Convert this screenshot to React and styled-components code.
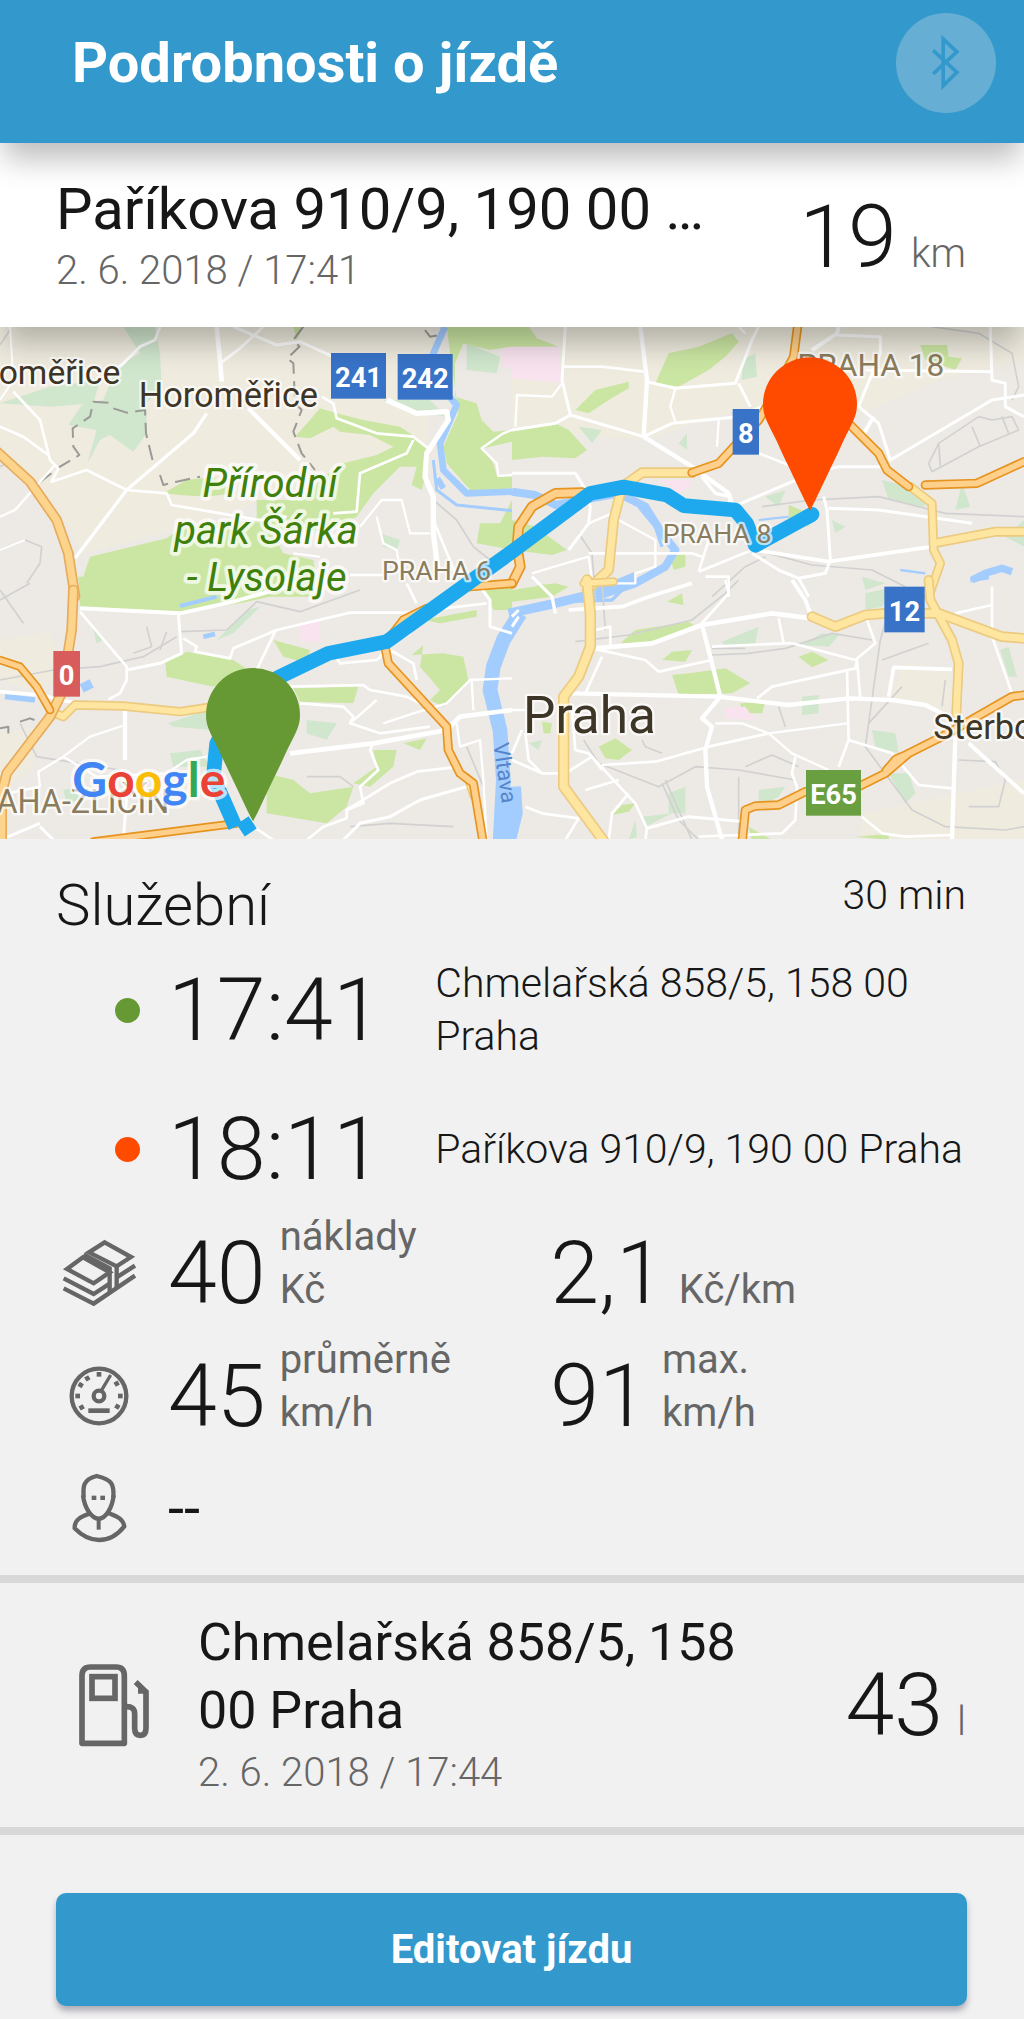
import React from "react";
import styled, { createGlobalStyle } from "styled-components";

const trip = {
  title: "Paříkova 910/9, 190 00 …",
  date: "2. 6. 2018 / 17:41",
  distance: "19",
  type: "Služební",
  duration: "30 min",
};

const stops = [
  { time: "17:41", address: "Chmelařská 858/5, 158 00 Praha", color: "#669933" },
  { time: "18:11", address: "Paříkova 910/9, 190 00 Praha", color: "#ff4b00" },
];

const refuel = {
  address: "Chmelařská 858/5, 158 00 Praha",
  date: "2. 6. 2018 / 17:44",
  amount: "43",
};

// The map is made of four tiles, every tile has its own coordinates
const tiles = [
  {
    x: 0,
    y: -21,
    fields: ["0,20 1300,20 1280,380 1100,480 800,540 480,640 250,700 170,560 0,390"],
    pale: [
      "370,20 465,20 480,100 485,200 440,250 440,340 400,395 330,345 300,360 262,430 290,330 205,315 245,255 310,240 350,140 420,100",
      "0,250 150,200 300,180 280,250 150,260",
      "1400,70 1500,110 1490,160 1400,150",
      "1150,240 1290,240 1340,290 1220,270",
      "1140,640 1200,660 1190,690 1150,680",
    ],
    parks: [
      "1340,20 1536,20 1536,80 1470,90 1390,70 1365,130 1365,230 1430,250 1445,300 1480,335 1536,330 1536,365 1450,385 1480,430 1490,465 1536,470 1536,505 1415,515 1340,430 1330,380 1375,280",
      "885,350 930,300 960,265 1010,280 1090,300 1200,320 1245,350 1290,385 1285,440 1265,510 1235,495 1250,440 1200,440 1120,520 1070,590 1000,625 870,640 770,600 770,540 900,540 970,470 1030,430 1130,405 1180,380 1110,345 1020,335 1000,320 930,355",
      "230,830 270,710 500,655 540,625 700,600 800,610 850,700 940,720 960,830",
      "490,520 560,480 640,470 700,520 620,530 540,525",
      "1430,670 1440,610 1500,610 1536,540 1536,690",
      "880,20 910,20 890,60",
    ],
    pink: ["1505,85 1536,80 1536,145 1510,140"],
    rivers: [
      ["1335,20 1300,100 1340,220 1370,255 1320,370 1330,450 1400,520 1536,515", 20],
      ["1300,420 1310,510 1370,555 1536,572", 9],
      ["1312,475 1330,505", 18],
    ],
    rails: ["0,440 20,430", "1300,540 1370,600 1420,680 1470,720", "0,690 75,660 125,680 120,730 80,790", "0,75 30,30"],
    borders: [
      "910,20 880,60 898,80 862,115 880,130 885,250 905,270 880,335 905,400 945,450",
      "325,248 280,245 270,290 218,325 220,380 238,405 180,440 115,490",
      "340,265 380,278 435,270 438,340 460,430",
      "480,465 490,495 530,485 600,470",
      "1275,30 1290,50 1320,45",
    ],
    roads: [
      ["650,20 660,120 665,185", 14],
      ["660,130 720,85 790,20", 8],
      ["700,20 830,75 900,65 1010,115", 9],
      ["480,20 465,60 420,80 365,135 330,160", 9],
      ["30,20 40,180 0,240", 6],
      ["40,215 120,300 150,420 175,445 155,485 260,450 380,510 500,520 515,555 780,600 860,590", 8],
      ["0,320 70,350 145,405", 8],
      ["0,590 45,570 165,435", 7],
      ["745,265 900,420", 13],
      ["620,280 580,340 380,510 225,715", 10],
      ["965,230 1000,250 1010,295 1130,340 1240,350 1285,385", 8],
      ["1160,240 1250,280 1340,275 1345,300 1280,400 1275,470 1300,530 1300,640 1315,760", 16],
      ["1240,360 1220,400 1080,460 1070,575 1000,580", 8],
      ["1050,765 1150,765 M1080,620 1145,540 1205,540 1230,640 1290,640", 7],
      ["1130,590 1150,670 1190,690 1200,750", 7],
      ["1300,600 1370,770", 8],
      ["1536,330 1510,340 1445,385 1490,430 1495,468 1536,465", 7],
      ["0,690 75,660 M880,700 960,710", 6],
    ],
    yellow: [],
    orange: [],
    amber: ["-20,385 90,485 170,600 205,700 225,830"],
  },
  {
    x: 1536,
    y: -21,
    fields: ["0,20 1536,20 1536,120 1280,180 1000,300 700,260 400,360 0,330"],
    pale: [
      "690,120 730,100 735,170 690,180",
      "200,320 270,330 240,370",
      "500,370 525,340 525,390",
      "1110,480 1230,510 1240,560 1130,540",
      "1350,490 1375,560 1330,570",
      "760,530 820,510 800,560",
      "1480,650 1536,600 1536,680",
      "1050,770 1120,790 1060,810",
      "960,600 1000,620 970,640",
    ],
    parks: [
      "0,20 50,20 75,55 140,80 0,80",
      "430,190 470,100 560,80 660,40 680,65 640,110 590,150 500,200",
      "190,270 250,210 350,185 350,205 290,240 230,280",
      "0,330 130,310 170,330 225,390 190,415 90,410 0,420",
      "1225,75 1305,75 1310,110 1350,115 1330,150 1240,120",
      "0,600 70,620 165,690 120,705 0,690",
      "470,700 520,700 520,740 485,750",
      "830,555 890,580 890,620 830,600",
      "80,790 140,800 100,830 60,830",
    ],
    pink: ["0,80 140,80 150,190 0,175", "440,480 530,480 540,500 500,520"],
    rivers: [
      ["0,515 70,525 130,555 320,520 400,560 450,640 490,690 460,740 370,790 250,830", 24],
      ["380,560 430,620 450,680", 10],
      ["740,600 830,590", 6],
      ["1380,780 1420,760 1470,745 1500,755", 22],
      ["1165,750 1240,760", 7],
    ],
    rails: [
      "750,560 900,540 1100,530 1300,580 1536,590",
      "200,640 240,700 250,830",
      "770,700 900,735 1080,750 1180,800",
      "600,830 700,740 760,710",
      "1260,20 1400,40 1500,100 1520,200 1500,240",
      "1250,430 1280,370 1400,290 1440,300 1500,290 1520,330 1400,380 1260,455 1250,430",
      "1280,370 1285,440 M1380,320 1405,380 M1470,290 1490,340",
    ],
    borders: [],
    roads: [
      ["160,20 150,180 175,285 130,310 0,330", 9],
      ["155,140 270,140 395,155", 8],
      ["385,20 405,180 395,350 540,440 650,520 660,550", 13],
      ["175,285 395,350 480,310 680,290 750,260", 9],
      ["405,185 490,205 670,190 720,60 740,20", 9],
      ["490,205 475,260 490,305 M620,300 615,380 M680,20 700,40", 7],
      ["680,190 715,260", 9],
      ["10,320 15,225 120,230 150,190", 7],
      ["0,460 190,460 215,500 235,560 230,610 170,690", 9],
      ["675,555 900,460 980,440 1130,440", 9],
      ["740,400 830,435 900,440", 8],
      ["570,470 610,520 655,530 650,555", 10],
      ["975,45 1105,50 1105,100 1060,210 1040,260 1100,310 1135,420 1440,240 1536,225", 9],
      ["1435,20 1440,180 1480,190 1480,260 1536,290 M1060,150 1440,155", 9],
      ["900,90 975,40 980,20 M1085,290 1050,350", 12],
      ["935,530 945,570 955,720 940,760 860,775", 9],
      ["950,565 1100,570 1380,610", 9],
      ["730,690 950,725 1260,680", 11],
      ["720,700 800,750 860,775 890,830", 9],
      ["230,700 540,700 570,710 M560,755 720,690 M580,770 650,770 650,830 M560,755 590,660", 8],
      ["320,600 430,660 430,740 370,760 370,790 300,790", 7],
      ["60,760 160,730 230,710 240,780", 7],
      ["230,610 300,580", 7],
    ],
    yellow: [
      ["345,490 390,458 540,458", 24],
      ["325,520 305,600 290,750 225,810", 24],
      ["1195,500 1260,550 1265,690 1285,730 1250,830", 20],
      ["1265,670 1450,635 1536,635", 22],
    ],
    orange: [
      ["858,10 845,110 770,250 740,300 620,430 540,458", 20],
      ["1010,310 1100,400 1125,450 1190,500", 20],
      ["1240,495 1395,490 1536,425", 20],
      ["210,518 130,520 60,560 20,620 15,680 25,740 0,790", 24],
    ],
    amber: [],
  },
  {
    x: 0,
    y: 759,
    fields: ["0,180 150,160 200,300 100,330 0,300", "0,460 120,440 100,560 0,640"],
    pale: [
      "275,130 310,180 290,190",
      "505,430 620,390 640,450 520,440",
      "510,520 600,510 630,560 520,560",
      "650,180 740,90 780,80 700,160",
      "920,420 1010,430 980,480 920,460",
      "190,630 240,620 240,660 200,670",
    ],
    parks: [
      "235,-10 960,-10 940,20 720,70 540,95 240,85",
      "495,240 560,215 700,240 760,280 640,320 500,290",
      "820,180 930,210 920,250 850,230",
      "880,325 1075,320 1060,370 900,365",
      "800,580 880,600 930,640 1060,620 1040,680 980,730 800,700",
      "1235,225 1330,220 1390,230 1405,300 1330,380 1290,360 1320,330 1260,260 1270,195",
      "1120,510 1190,510 1180,560 1110,620 1060,610 1130,560",
      "1270,120 1430,90 1430,110 1320,130",
      "1450,20 1536,0 1536,90 1480,90",
      "1210,490 1280,475 1260,510",
    ],
    pink: ["900,125 960,122 962,185 902,185"],
    rivers: [
      ["1560,100 1510,180 1480,260 1470,330 1500,450 1510,600 1500,790", 44],
      ["540,78 650,50", 12],
      ["15,350 105,360", 16],
      ["245,325 275,310", 28],
      ["610,170 645,162", 14],
    ],
    rails: [
      "0,300 160,270 300,260 430,230 530,170",
      "440,140 455,200 400,220 M500,155 480,210",
      "540,155 680,150 770,65 900,95 1080,30",
      "0,30 70,130 M0,60 90,10",
      "60,430 110,530 360,570",
      "1050,740 1170,730 1360,740 M1400,500 1450,620",
      "920,590 1020,590 1060,620",
    ],
    borders: ["60,425 90,415 130,430 160,415", "0,445 25,440 25,470"],
    roads: [
      ["240,85 540,100 700,65 860,20", 12],
      ["240,95 380,260 380,300 360,340 325,358", 8],
      ["535,105 545,220 480,250 380,270", 9],
      ["550,175 590,200 585,215 690,235 700,205 830,150 1050,98 1260,98", 8],
      ["825,155 770,270", 8],
      ["0,335 120,345 230,370", 11],
      ["375,385 375,540", 13],
      ["375,435 270,470 190,530 115,575 120,620 0,645", 7],
      ["190,530 290,590 500,580 560,540 620,530", 7],
      ["870,520 1120,490 1340,450 1380,410 1536,390", 14],
      ["860,320 1090,315 1110,330 1220,350 1260,370", 8],
      ["900,370 1030,380 1060,410 1050,430 1140,460 1290,440", 8],
      ["1120,490 1110,510 1135,570 1080,620 1090,670 1040,690 1040,715 970,740 920,780", 8],
      ["1030,780 1080,730 1170,710 1260,660 1400,620", 9],
      ["1040,690 1170,610 1250,575 1380,560", 8],
      ["1000,220 1020,250 1130,240 1170,210 1240,250 1250,300", 8],
      ["1140,230 1160,200 1230,160 1240,110 1290,90 1460,70", 8],
      ["1130,360 1050,430 M1150,430 1240,400 1340,370 1410,300 1536,295", 7],
      ["1440,20 1470,60 1470,140 1536,160", 9],
      ["1370,430 1380,500 1440,480 1450,600 1460,780 M1415,300 1420,390", 7],
      ["120,740 160,780 M0,780 120,730 M380,650 370,780", 9],
      ["760,740 820,780 M1220,10 1250,70", 8],
    ],
    yellow: [
      ["165,400 190,410 225,375 370,378 540,395 640,380", 20],
      ["1420,650 1400,590", 14],
    ],
    orange: [
      ["0,240 60,260 110,320 150,390", 18],
      ["1155,200 1165,250 1340,440 1345,510 1380,580 1420,610 1450,790", 20],
      ["280,785 710,730", 18],
      ["1160,185 1210,120 1280,85 M1410,20 1536,10", 20],
    ],
    amber: ["220,30 215,150 185,340 150,410 20,580 5,640 5,790"],
  },
  {
    x: 1536,
    y: 759,
    fields: ["1180,250 1320,270 1310,400 1130,350", "1050,700 1536,600 1536,780 1050,780"],
    pale: [
      "630,185 740,140 730,190 640,200",
      "870,195 930,160 980,165 950,200",
      "1060,90 1060,40 1150,20 1110,80",
      "1080,450 1150,460 1160,520 1090,500",
      "1130,580 1190,580 1210,640 1180,670",
      "740,630 820,620 800,650 740,680",
      "470,640 520,620 520,700 470,700",
      "390,710 480,700 400,740",
      "870,350 920,345 920,400 870,405",
      "1465,210 1490,200 1515,290 1490,290",
      "50,490 90,480 80,510",
      "370,720 375,770 350,780",
    ],
    parks: [
      "0,30 130,10 170,20 120,50 0,65",
      "325,190 370,150 530,125 545,135 440,185",
      "480,285 530,280 640,265 715,310 660,340 500,345",
      "450,240 480,215 540,210 520,245",
      "465,65 510,40 515,75",
      "860,230 900,215 950,240 900,262",
      "260,500 310,475 360,510 320,540 280,535",
      "685,370 760,365 750,400 690,400",
      "90,425 120,430 115,460 95,460",
      "300,705 330,675 370,670 350,695",
      "710,740 780,780 720,780",
      "1030,770 1130,762 1130,780",
    ],
    pink: ["635,385 700,380 730,420 640,415"],
    rivers: [
      ["-10,100 130,70 250,40 370,-10", 28],
      ["160,65 300,60 330,30", 10],
      ["-10,780 10,700 5,620", 44],
      ["1375,0 1430,-10", 16],
    ],
    rails: [
      "190,185 350,165 540,120 640,40 680,0",
      "600,205 700,205 M600,225 710,220 820,205 960,160 1080,180",
      "215,480 260,550 440,620 550,560 680,570 850,600",
      "450,610 500,720 560,780 M460,600 540,780",
      "680,590 680,780 M700,560 780,525 860,560",
      "1105,180 1060,500 1200,690 1300,740 1480,750 1536,740",
      "1110,240 1250,190 M1070,430 1170,320 M1105,180 1150,20",
      "390,480 400,500 450,520 M800,380 820,440",
      "1340,540 1450,545 1480,600 1460,680 1370,680 M1300,300 1290,380",
      "270,10 280,150",
    ],
    borders: [],
    roads: [
      ["60,-10 120,50 130,100", 10],
      ["170,90 240,85 330,80 410,50 540,10", 11],
      ["0,110 20,90 M0,140 20,110", 9],
      ["245,205 420,190 570,135 780,100 900,115", 14],
      ["570,135 600,250 625,350 570,415 600,440 580,510 585,620 630,780", 13],
      ["565,135 650,40 640,0", 8],
      ["240,205 400,240 440,275 600,240", 8],
      ["180,340 620,350 830,375 1010,355 1140,360 1240,375 1290,400", 13],
      ["800,115 815,190 600,200 M815,190 840,190 1030,240 1090,190 1065,120", 8],
      ["735,355 780,320 1030,265 1035,240 1045,355 M1005,270 1010,480 980,560", 8],
      ["1130,350 1145,262 1320,268", 11],
      ["610,430 690,430 770,460 1005,430 M770,460 840,520 950,570", 7],
      ["270,555 430,545 590,500 770,460", 8],
      ["1010,480 1140,520 1220,615 1320,625", 8],
      ["840,0 880,60 900,115", 12],
      ["1330,470 1320,780", 13],
      ["1370,490 1536,640", 12],
      ["1440,20 1440,170 1500,340 M1330,100 1440,75", 8],
      ["270,230 220,340 M250,150 295,140 295,195", 8],
      ["0,540 90,580 160,580 240,530 270,570 M40,460 50,540 90,580", 8],
      ["180,390 190,510 230,520 370,670 405,745 400,780", 8],
      ["405,745 530,710 700,725", 9],
      ["850,530 840,580 855,620 850,720 810,760 560,770 M1050,710 1110,760 1180,770 1320,765", 8],
      ["40,680 90,700 200,715 160,780 M220,630 320,600 M290,780 300,700 350,640", 8],
      ["0,390 40,390 M30,450 0,520", 8],
    ],
    yellow: [
      ["225,0 235,100 235,200 200,290 155,350 155,620 280,790", 26],
      ["900,110 970,140 1060,105 1120,100 1280,100 1470,170 1536,175", 24],
      ["1250,0 1255,60 1320,180 1340,250 1333,400", 22],
      ["215,10 305,5", 18],
    ],
    orange: [
      ["690,790 700,690 730,678 800,675 880,635 1040,620 1120,580 1190,520 1290,470 1500,350 1536,345", 20],
      ["1120,570 1150,535 1185,520", 14],
    ],
    amber: [],
  },
];

const points = (list) => `M${list}`;

function TileLayer({ children }) {
  return tiles.map((tile) => (
    <g key={`${tile.x}-${tile.y}`} transform={`translate(${tile.x} ${tile.y})`}>
      {children(tile)}
    </g>
  ));
}

function Lines({ list, color, casing, extra = 0 }) {
  return (
    <>
      {casing &&
        list.map(([d, width]) => (
          <path key={`c${d}`} d={points(d)} stroke={casing} strokeWidth={width + 8} />
        ))}
      {list.map(([d, width]) => (
        <path key={d} d={points(d)} stroke={color} strokeWidth={width + extra} />
      ))}
    </>
  );
}

function Shapes({ list, color }) {
  return list.map((p) => <polygon key={p} points={p} fill={color} />);
}

function Pin({ x, y, color }) {
  return (
    <path
      transform={`translate(${x} ${y})`}
      fill={color}
      d="M0,319 L-15,290 C-50,215 -78,160 -100,110 C-125,58 -141,38 -141,0 A141,141 0 1 1 141,0 C141,38 125,58 100,110 C78,160 50,215 15,290 Z"
    />
  );
}

function RoadBadge({ x, y, width, color, children }) {
  return (
    <g transform={`translate(${x} ${y})`}>
      <rect width={width} height="137" fill={color} />
      <BadgeText x={width / 2} y="103">
        {children}
      </BadgeText>
    </g>
  );
}

function TripMap() {
  return (
    <MapSvg viewBox="0 0 3072 1536" role="img" aria-label="Mapa trasy">
      <rect width="3072" height="1536" fill="#edeae5" />
      <TileLayer>
        {(t) => (
          <>
            <Shapes list={t.fields} color="#efebdf" />
            <Shapes list={t.pale} color="#d0e6cd" />
            <Shapes list={t.parks} color="#cbe6a3" />
            <Shapes list={t.pink} color="#f8e3ef" />
          </>
        )}
      </TileLayer>
      <g fill="none" strokeLinejoin="round">
        <TileLayer>{(t) => <Lines list={t.rivers} color="#a3ccff" />}</TileLayer>
        <TileLayer>
          {(t) => <Lines list={t.rails.map((d) => [d, 5])} color="#d2d1d1" />}
        </TileLayer>
        <g strokeDasharray="46 22">
          <TileLayer>
            {(t) => <Lines list={t.borders.map((d) => [d, 6])} color="#9c9a97" />}
          </TileLayer>
        </g>
        <TileLayer>{(t) => <Lines list={t.roads} color="#ffffff" />}</TileLayer>
        <g strokeLinecap="round">
          <TileLayer>
            {(t) => (
              <>
                <Lines list={t.yellow} color="#ffe6a0" casing="#ecca80" extra={-2} />
                <Lines
                  list={t.amber.map((d) => [d, 24])}
                  color="#fdd48c"
                  casing="#e6ab5c"
                  extra={-2}
                />
                <Lines list={t.orange} color="#ffd08c" casing="#e69420" extra={-2} />
              </>
            )}
          </TileLayer>
        </g>
        <g stroke="#1ea9ee" strokeWidth="44">
          <path d="M2436,562 L2266,655 L2240,590 L2206,549 L2051,536 L2001,504 L1871,480 L1771,499 L1536,674 L1160,944 L985,979 L840,1049 L720,1110 L650,1250 L640,1350 L706,1500" />
          <path d="M722,1510 L758,1486" />
          <path d="M2420,571 L2436,562" strokeLinecap="round" />
        </g>
      </g>

      <PlaceText x="-4" y="172" size="101">oměřice</PlaceText>
      <PlaceText x="416" y="241" size="103">Horoměřice</PlaceText>
      <ParkText x="810" y="509">Přírodní</ParkText>
      <ParkText x="798" y="651">park Šárka</ParkText>
      <ParkText x="800" y="791">- Lysolaje</ParkText>
      <DistrictText x="1146" y="759" size="80">PRAHA 6</DistrictText>
      <DistrictText x="1988" y="647" size="80">PRAHA 8</DistrictText>
      <DistrictText x="2392" y="146" size="95">PRAHA 18</DistrictText>
      <DistrictText x="508" y="1459" size="97" textAnchor="end">PRAHA-ZLIČÍN</DistrictText>
      <PlaceText x="1569" y="1217" size="154">Praha</PlaceText>
      <PlaceText x="2800" y="1236" size="103">Sterbohol</PlaceText>
      <RiverText transform="translate(1480 1250) rotate(82)">Vltava</RiverText>

      <RoadBadge x="993" y="78" width={165} color="#3873c8">241</RoadBadge>
      <RoadBadge x="1193" y="81" width={165} color="#3873c8">242</RoadBadge>
      <RoadBadge x="2198" y="246" width={79} color="#3873c8">8</RoadBadge>
      <RoadBadge x="2653" y="779" width={121} color="#3873c8">12</RoadBadge>
      <RoadBadge x="2418" y="1329" width={165} color="#699f40">E65</RoadBadge>
      <RoadBadge x="160" y="972" width={80} color="#d95c5c">0</RoadBadge>

      <LogoText x="217" y="1409">
        <tspan fill="#4285f4">G</tspan>
        <tspan fill="#ea4335">o</tspan>
        <tspan fill="#fbbc05">o</tspan>
        <tspan fill="#4285f4">g</tspan>
        <tspan fill="#34a853">l</tspan>
        <tspan fill="#ea4335">e</tspan>
      </LogoText>
      <Pin x={759} y={1164} color="#669933" />
      <Pin x={2430} y={232} color="#ff4b00" />
    </MapSvg>
  );
}

function BluetoothIcon() {
  return (
    <svg width="100" height="100" viewBox="48 39 299 299" fill="none" aria-hidden="true">
      <path
        d="M159,151 L230,216 L189,257 V117 L230,155 L159,221"
        stroke="#3399cc"
        strokeWidth="11"
      />
    </svg>
  );
}

function MoneyIcon() {
  return (
    <svg width="76" height="72" viewBox="182 110 228 216" fill="none" aria-hidden="true">
      <g stroke="#666666" strokeWidth="13">
        <path d="M313,126 L392,170 L349,198 L266,156 Z" />
        <path d="M248,171 L200,206 L280,249 L328,216 Z" />
        <path d="M250,162 L328,204 V274" />
        <path d="M349,192 V260" />
        <path d="M190,234 L280,281 L328,250 M349,231 L404,196" />
        <path d="M190,264 L280,310 L404,226" />
      </g>
    </svg>
  );
}

function GaugeIcon() {
  const ticks = [
    [296, 523, 0],
    [261, 535, -30],
    [241, 555, -60],
    [232, 588, 0],
    [244, 622, 60],
    [349, 551, 60],
    [360, 588, 0],
    [351, 620, 30],
  ];
  return (
    <svg width="60" height="60" viewBox="206 498 180 180" fill="none" aria-hidden="true">
      <circle cx="296" cy="588" r="82" stroke="#666666" strokeWidth="13" />
      <circle cx="296" cy="588" r="16" stroke="#666666" strokeWidth="13" />
      <path d="M303,572 L331,525" stroke="#666666" strokeWidth="10" />
      {ticks.map(([x, y, angle]) => (
        <rect
          key={`${x}-${y}`}
          x={x - 7}
          y={y - 7}
          width="14"
          height="14"
          fill="#666666"
          transform={`rotate(${angle} ${x} ${y})`}
        />
      ))}
      <rect x="264" y="625" width="64" height="14" fill="#666666" />
    </svg>
  );
}

function DriverIcon() {
  return (
    <svg width="60" height="72" viewBox="208 817 180 216" fill="none" aria-hidden="true">
      <g stroke="#666666" strokeWidth="13" strokeLinejoin="round">
        <path d="M252,893 C250,862 248,840 291,829 C334,840 344,850 341,893" />
        <path d="M250,887 C254,925 276,957 297,957 C318,957 338,925 342,887" />
        <path d="M270,942 C240,952 224,962 225,986 C250,1012 276,1021 298,1021 C322,1021 350,1010 374,980 C369,955 350,950 326,940" />
        <path d="M297,957 V990" strokeWidth="12" />
      </g>
      <rect x="276" y="888" width="14" height="13" fill="#666666" />
      <rect x="302" y="888" width="14" height="13" fill="#666666" />
    </svg>
  );
}

function FuelIcon() {
  return (
    <svg width="72" height="84" viewBox="84 66 216 252" fill="none" aria-hidden="true">
      <g stroke="#666666" strokeWidth="17">
        <path d="M96,307 V104 Q96,78 122,78 H198 Q223,78 223,104 V307 Z" strokeLinejoin="round" />
        <rect x="126" y="107" width="69" height="65" />
        <path d="M228,197 Q254,196 254,218 V262 Q254,283 271,283 Q288,283 288,262 V153 L257,123" />
      </g>
      <polygon points="264,132 264,158 288,158" fill="#666666" />
    </svg>
  );
}

function Metric({ value, label, unit }) {
  return (
    <MetricBox>
      <BigNumber>{value}</BigNumber>
      <MetricLabel>
        {label && <span>{label}</span>}
        <span>{unit}</span>
      </MetricLabel>
    </MetricBox>
  );
}

function App() {
  return (
    <Page>
      <GlobalStyle />
      <Header>
        <h1>Podrobnosti o jízdě</h1>
        <RoundButton type="button" aria-label="Bluetooth">
          <BluetoothIcon />
        </RoundButton>
      </Header>

      <Summary>
        <div>
          <h2>{trip.title}</h2>
          <DateText>{trip.date}</DateText>
        </div>
        <Amount>
          <BigNumber>{trip.distance}</BigNumber>
          <span>km</span>
        </Amount>
      </Summary>

      <TripMap />

      <Details>
        <DetailsHead>
          <h2>{trip.type}</h2>
          <span>{trip.duration}</span>
        </DetailsHead>
        <Stops>
          {stops.map((stop) => (
            <Stop key={stop.time}>
              <Dot $color={stop.color} />
              <BigNumber>{stop.time}</BigNumber>
              <p>{stop.address}</p>
            </Stop>
          ))}
        </Stops>
        <Metrics>
          <MetricRow>
            <IconCell>
              <MoneyIcon />
            </IconCell>
            <Metric value="40" label="náklady" unit="Kč" />
            <Metric value="2,1" unit="Kč/km" />
          </MetricRow>
          <MetricRow>
            <IconCell>
              <GaugeIcon />
            </IconCell>
            <Metric value="45" label="průměrně" unit="km/h" />
            <Metric value="91" label="max." unit="km/h" />
          </MetricRow>
        </Metrics>
        <DriverRow>
          <DriverIcon />
          <span>--</span>
        </DriverRow>
      </Details>

      <Refuel>
        <FuelIcon />
        <div>
          <h3>{refuel.address}</h3>
          <DateText>{refuel.date}</DateText>
        </div>
        <Amount>
          <BigNumber>{refuel.amount}</BigNumber>
          <span>l</span>
        </Amount>
      </Refuel>

      <Footer>
        <EditButton type="button">Editovat jízdu</EditButton>
      </Footer>
    </Page>
  );
}

export default App;

const GlobalStyle = createGlobalStyle`
  * {
    box-sizing: border-box;
  }
  body {
    margin: 0;
    background-color: #f1f1f1;
    color: #171717;
    font-family: Roboto, "Liberation Sans", sans-serif;
    font-weight: 300;
  }
  h1, h2, h3, p {
    margin: 0;
    font-weight: 300;
  }
`;

const Page = styled.main`
  display: flex;
  flex-direction: column;
`;

const Header = styled.header`
  position: relative;
  z-index: 2;
  display: flex;
  justify-content: space-between;
  align-items: center;
  padding: 13px 28px 30px 72px;
  background-color: #3399cc;
  box-shadow: 0 20px 28px -4px rgba(0, 0, 0, 0.26);
  h1 {
    color: #ffffff;
    font-size: 56px;
    line-height: 68px;
    font-weight: 700;
  }
`;

const RoundButton = styled.button`
  display: flex;
  padding: 0;
  border: none;
  border-radius: 50%;
  background-color: #66aed4;
  cursor: pointer;
`;

const Summary = styled.section`
  position: relative;
  z-index: 1;
  display: flex;
  justify-content: space-between;
  align-items: center;
  padding: 32px 58px 28px 56px;
  background-color: #ffffff;
  box-shadow: 0 20px 28px -4px rgba(0, 0, 0, 0.26);
  h2 {
    font-size: 58px;
    line-height: 68px;
    font-weight: 400;
  }
`;

const DateText = styled.p`
  color: #666666;
  font-size: 40px;
  line-height: 56px;
`;

const BigNumber = styled.span`
  color: #171717;
  font-size: 88px;
  line-height: 84px;
`;

const Amount = styled.div`
  display: flex;
  justify-content: flex-end;
  align-items: baseline;
  gap: 14px;
  color: #666666;
  font-size: 40px;
`;

const MapSvg = styled.svg`
  display: block;
  width: 100%;
`;

const MapText = styled.text`
  font-family: Roboto, "Liberation Sans", sans-serif;
  font-weight: 400;
  paint-order: stroke;
  stroke: rgba(255, 255, 255, 0.7);
  stroke-width: 14px;
  stroke-linejoin: round;
`;

const PlaceText = styled(MapText)`
  fill: #3d3526;
  font-size: ${(props) => props.size}px;
`;

const ParkText = styled(MapText)`
  fill: #3f800b;
  font-size: 120px;
  font-style: italic;
  text-anchor: middle;
  stroke-width: 22px;
`;

const DistrictText = styled(MapText)`
  fill: #8a7c5c;
  font-size: ${(props) => props.size}px;
`;

const RiverText = styled(MapText)`
  fill: #5585c8;
  font-size: 66px;
  stroke: none;
`;

const BadgeText = styled.text`
  fill: #ffffff;
  font-family: Roboto, "Liberation Sans", sans-serif;
  font-size: 82px;
  font-weight: 700;
  text-anchor: middle;
`;

const LogoText = styled(MapText)`
  font-family: Lato, Roboto, sans-serif;
  font-size: 144px;
  font-weight: 700;
  stroke-width: 20px;
`;

const Details = styled.section`
  padding: 32px 58px 31px 56px;
`;

const DetailsHead = styled.div`
  display: flex;
  justify-content: space-between;
  align-items: flex-start;
  margin-bottom: 18px;
  h2 {
    font-size: 58px;
    line-height: 68px;
  }
  span {
    font-size: 41px;
    line-height: 48px;
  }
`;

const Stops = styled.div`
  display: grid;
  gap: 33px;
  margin-bottom: 8px;
`;

const Stop = styled.div`
  display: grid;
  grid-template-columns: 86px 5fr 11fr;
  column-gap: 26px;
  align-items: center;
  min-height: 106px;
  p {
    font-size: 41px;
    line-height: 53px;
  }
`;

const Dot = styled.span`
  justify-self: end;
  width: 25px;
  height: 25px;
  margin-right: 2px;
  border-radius: 50%;
  background-color: ${(props) => props.$color};
`;

const Metrics = styled.div`
  display: grid;
  gap: 17px;
`;

const MetricRow = styled.div`
  display: grid;
  grid-template-columns: 86px 6fr 7fr;
  column-gap: 26px;
  align-items: end;
`;

const IconCell = styled.div`
  display: grid;
  place-items: center;
  height: 86px;
`;

const MetricBox = styled.div`
  display: flex;
  align-items: last baseline;
  gap: 14px;
`;

const MetricLabel = styled.span`
  display: flex;
  flex-direction: column;
  color: #666666;
  font-size: 40px;
  font-weight: 400;
  line-height: 53px;
`;

const DriverRow = styled.div`
  display: grid;
  grid-template-columns: 86px 1fr;
  column-gap: 26px;
  justify-items: start;
  align-items: center;
  margin-top: 33px;
  svg {
    justify-self: center;
  }
  span {
    font-size: 58px;
    font-weight: 400;
    line-height: 68px;
  }
`;

const Refuel = styled.section`
  display: grid;
  grid-template-columns: 116px 1fr 160px;
  column-gap: 26px;
  align-items: center;
  padding: 26px 58px 26px 56px;
  border-top: 8px solid #d8d8d8;
  border-bottom: 8px solid #d8d8d8;
  svg {
    justify-self: center;
  }
  h3 {
    font-size: 52px;
    line-height: 68px;
    font-weight: 400;
  }
`;

const Footer = styled.footer`
  padding: 58px 57px 13px 56px;
`;

const EditButton = styled.button`
  width: 100%;
  height: 113px;
  border: none;
  border-radius: 10px;
  background-color: #3399cc;
  box-shadow: 0 5px 6px rgba(60, 50, 80, 0.35);
  color: #ffffff;
  font-family: inherit;
  font-size: 40px;
  font-weight: 700;
  cursor: pointer;
`;
